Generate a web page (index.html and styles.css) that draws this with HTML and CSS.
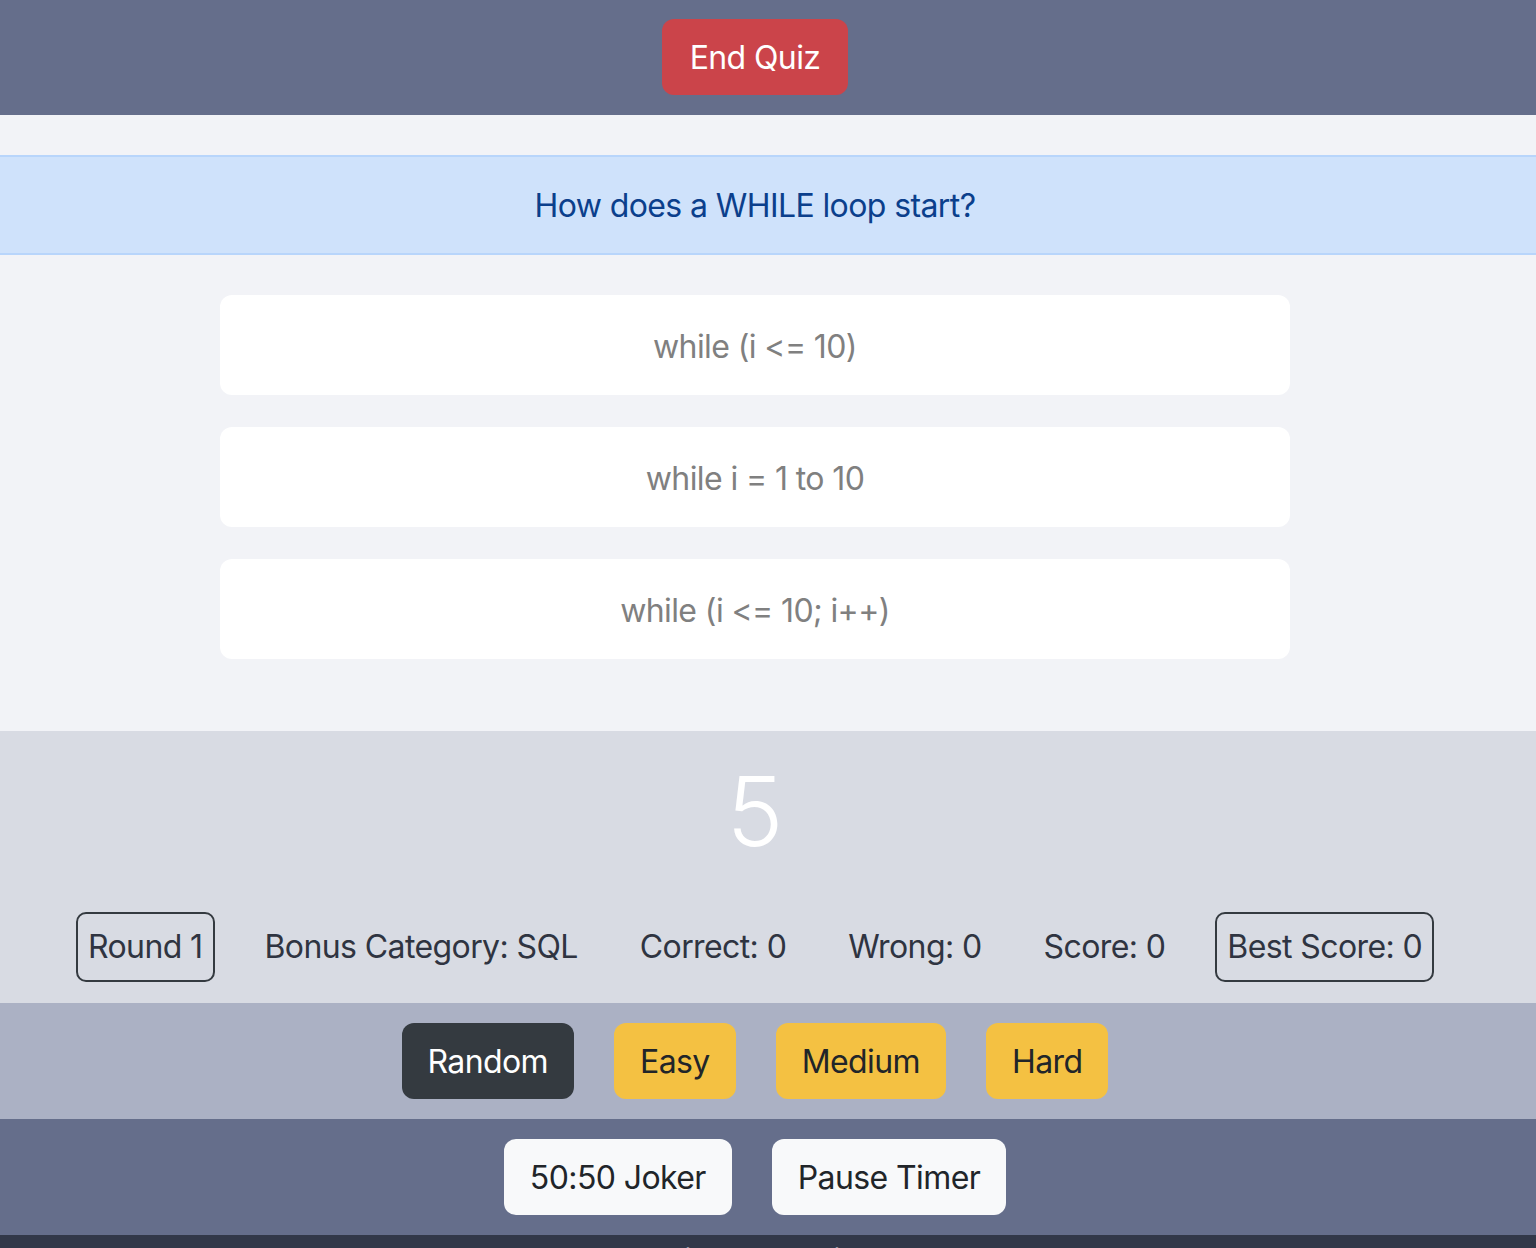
FILE: index.html
```html
<!DOCTYPE html>
<html lang="en">
<head>
<meta charset="utf-8">
<title>Quiz</title>
<link rel="stylesheet" href="styles.css">
</head>
<body>
<header class="topbar">
  <div class="inner">
    <button class="btn btn-danger">End Quiz</button>
  </div>
</header>
<main class="quiz">
  <div class="question"><div class="inner">How does a WHILE loop start?</div></div>
  <div class="inner">
    <div class="answers">
      <div class="answer">while (i &lt;= 10)</div>
      <div class="answer">while i = 1 to 10</div>
      <div class="answer">while (i &lt;= 10; i++)</div>
    </div>
  </div>
</main>
<section class="status">
  <div class="inner">
    <div class="timer">5</div>
    <div class="stats">
      <span class="stat boxed">Round 1</span>
      <span class="stat">Bonus Category: SQL</span>
      <span class="stat">Correct: 0</span>
      <span class="stat">Wrong: 0</span>
      <span class="stat">Score: 0</span>
      <span class="stat boxed">Best Score: 0</span>
    </div>
  </div>
</section>
<section class="difficulty">
  <div class="inner row">
    <button class="btn btn-dark">Random</button>
    <button class="btn btn-warning">Easy</button>
    <button class="btn btn-warning">Medium</button>
    <button class="btn btn-warning">Hard</button>
  </div>
</section>
<section class="jokers">
  <div class="inner row">
    <button class="btn btn-light">50:50 Joker</button>
    <button class="btn btn-light">Pause Timer</button>
  </div>
</section>
<footer class="footer">
  <div class="inner">Copyright by Quiz API</div>
</footer>
</body>
</html>
```
FILE: styles.css
```css
* { box-sizing: border-box; }
html, body { margin: 0; padding: 0; }
body {
  font-family: Inter, "Noto Sans", "Liberation Sans", sans-serif;
  font-size: 32px;
  line-height: 1.5;
  letter-spacing: -0.6px;
  color: #212529;
  background: #f2f3f7;
}
.inner {
  padding-right: 26px;
  text-align: center;
}
.row {
  display: flex;
  justify-content: center;
  gap: 40px;
}
.btn {
  font-family: inherit;
  font-size: 32px;
  letter-spacing: -0.6px;
  line-height: 48px;
  padding: 13px 24px 11px;
  border: 2px solid transparent;
  border-radius: 12px;
  cursor: pointer;
}
.btn-danger { background: #cb444a; color: #fff; }
.btn-dark { background: #343a40; color: #fff; }
.btn-warning { background: #f4c142; color: #212529; }
.btn-light { background: #f8f9fa; color: #212529; }

.topbar {
  background: #656e8b;
  padding: 19px 0 20px;
}
.topbar .btn { padding: 13px 26px 11px; }

.quiz {
  background: #f2f3f7;
  padding: 40px 0 72px;
}
.question {
  background: #cfe2fb;
  border-top: 2px solid #b8d5fb;
  border-bottom: 2px solid #b8d5fb;
  color: #0b3f8c;
  padding: 25px 0 23px;
  line-height: 48px;
}
.answers {
  width: 1070px;
  margin: 40px auto 0;
  display: flex;
  flex-direction: column;
  gap: 32px;
}
.answer {
  background: #fff;
  border-radius: 12px;
  color: #808080;
  padding: 28px 0 24px;
  line-height: 48px;
}

.status {
  background: #d8dbe3;
  padding: 8px 0 21px;
}
.timer {
  color: #fff;
  font-size: 96px;
  font-weight: 300;
  letter-spacing: 0;
  line-height: 144px;
}
.stats {
  margin-top: 29px;
  display: flex;
  justify-content: center;
  gap: 38px;
  color: #2f3441;
}
.stat {
  padding: 9px 10px;
  border: 2px solid transparent;
  border-radius: 10px;
  line-height: 48px;
}
.stat.boxed { border-color: #343a40; }

.difficulty {
  background: #abb1c4;
  padding: 20px 0 20px;
}
.jokers {
  background: #656e8b;
  padding: 20px 0 20px;
}
.footer {
  background: #323849;
  color: #fff;
  line-height: 1.2;
  padding: 7px 0 20px;
}
```
